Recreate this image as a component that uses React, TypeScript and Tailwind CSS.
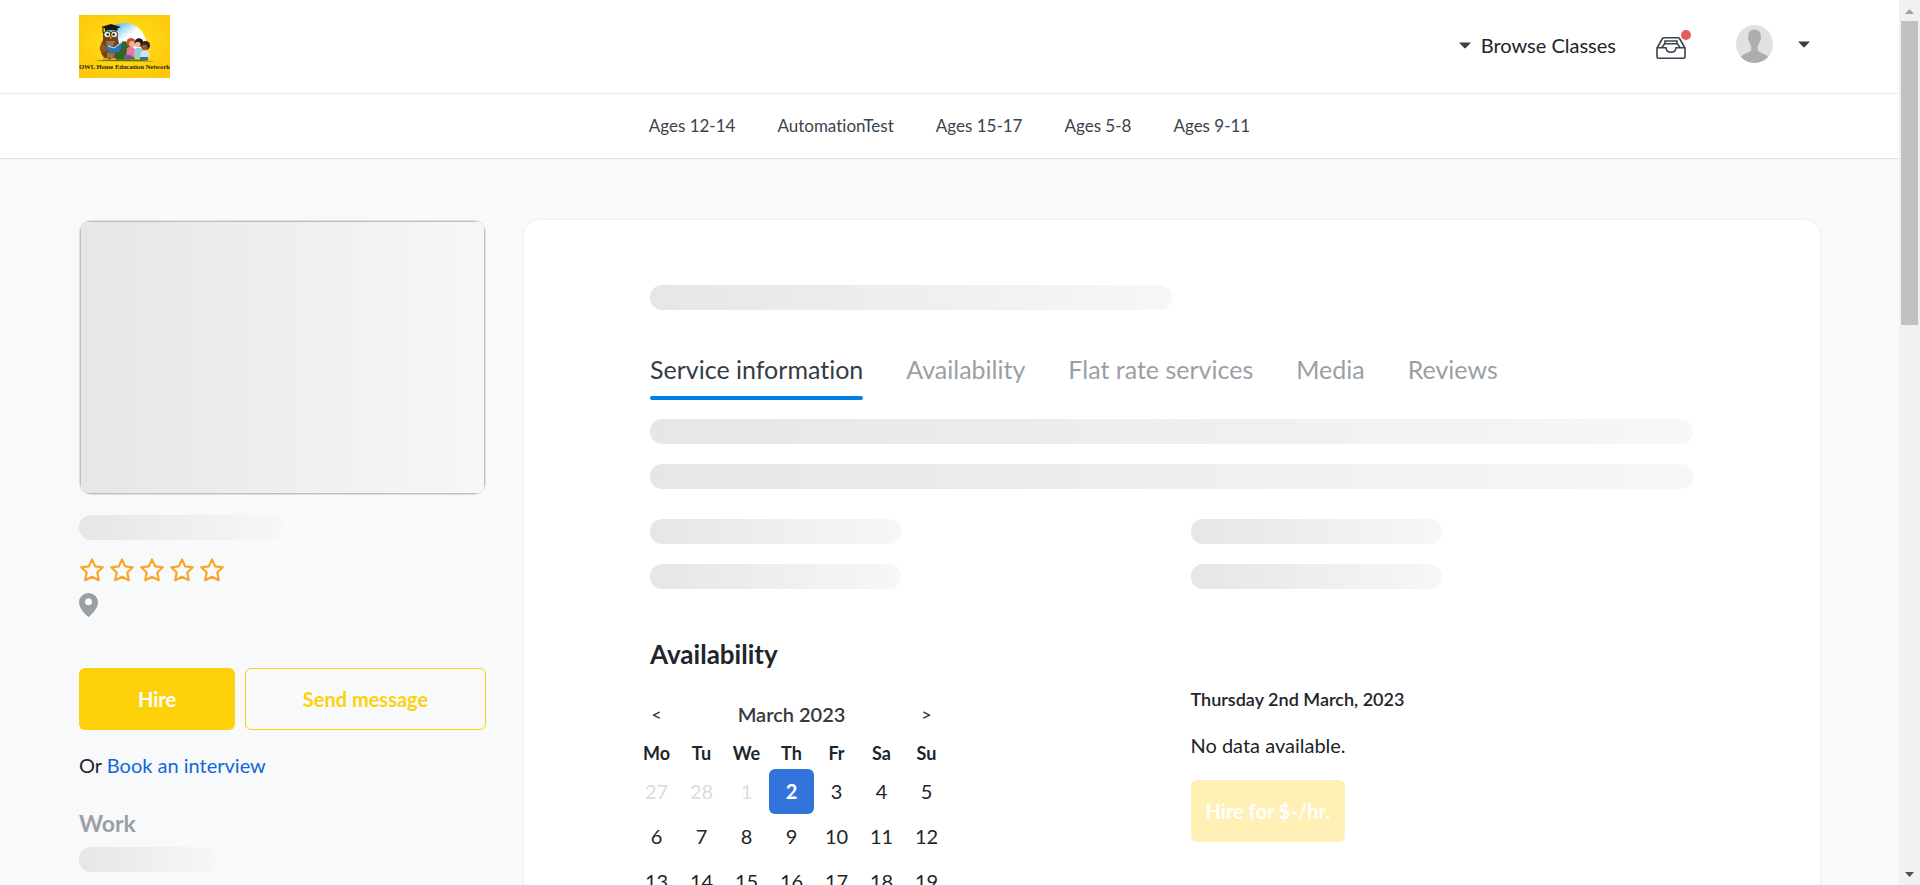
import React from "react";

const categories = ["Ages 12-14", "AutomationTest", "Ages 15-17", "Ages 5-8", "Ages 9-11"];
const tabs = ["Service information", "Availability", "Flat rate services", "Media", "Reviews"];
const weekdays = ["Mo", "Tu", "We", "Th", "Fr", "Sa", "Su"];
const weeks = [
  [27, 28, 1, 2, 3, 4, 5],
  [6, 7, 8, 9, 10, 11, 12],
  [13, 14, 15, 16, 17, 18, 19],
];

function Skeleton({ className }: { className: string }) {
  return <div className={`h-[25px] rounded-xl bg-linear-to-r from-[#e6e6e6] to-[#f7f7f7] ${className}`} />;
}

function Caret() {
  return (
    <svg width="12" height="7" viewBox="0 0 12 7" aria-hidden="true">
      <path d="M0 0.5h12L7 5.8q-1 1-2 0z" fill="#373f49" />
    </svg>
  );
}

function Logo() {
  return (
    <svg className="h-[63px] w-[91px]" viewBox="0 0 91 63" role="img" aria-label="OWL Home Education Network">
      <defs>
        <radialGradient id="logo-bg" cx="50%" cy="45%" r="65%">
          <stop offset="0" stopColor="#ffe318" />
          <stop offset="1" stopColor="#fdc60a" />
        </radialGradient>
        <linearGradient id="logo-sky" x1="0" y1="0" x2="1" y2="1">
          <stop offset="0.1" stopColor="#45b4ea" />
          <stop offset="0.5" stopColor="#ffffff" />
        </linearGradient>
      </defs>
      <rect width="91" height="63" fill="url(#logo-bg)" />
      <path d="M29 15Q36 7 47 8Q62 9 67 25V36H38z" fill="url(#logo-sky)" />
      <path d="M33 45Q36 28 46 26Q53 30 56 44z" fill="#2d6a1d" />
      <path d="M15 46Q45 42 76 46.500Q45 46 15 46z" fill="#5b7a12" />
      <path d="M24 17H38L39 24Q41 30 39 36Q37 43 33 44H27Q21 40 21.500 32Q22 28 24 25z" fill="#70411f" />
      <path d="M27 26H36L34 31H28z" fill="#a8713c" />
      <path d="M23 28Q18 34 24 38L31 34z" fill="#8b5529" />
      <path d="M28 37L36 39L34 43H28z" fill="#a8713c" />
      <ellipse cx="28.300" cy="19.500" rx="3.600" ry="3.400" fill="#f5efc4" stroke="#2a2118" strokeWidth="0.900" />
      <ellipse cx="35.200" cy="19.500" rx="3.400" ry="3.400" fill="#f5efc4" stroke="#2a2118" strokeWidth="0.900" />
      <circle cx="28.800" cy="19.500" r="1.200" fill="#222" />
      <circle cx="34.600" cy="19.500" r="1.200" fill="#222" />
      <path d="M30.500 21.500h2.500l-1.200 3z" fill="#f5a300" />
      <path d="M22 12L32 9L42 12L38.500 13.500V16Q32 14 26 16V13.500z" fill="#171717" />
      <path d="M24 13v5" stroke="#171717" strokeWidth="1" />
      <path d="M27 30L35 32L44 26L41 36L35 39L29 36z" fill="#2876b5" />
      <path d="M29 31L35 33L43 27" fill="none" stroke="#d9e8ee" strokeWidth="1" />
      <path d="M24 43h5v2h-5zM32 43h5v2h-5z" fill="#e4a02b" />
      <circle cx="52" cy="27.500" r="4.500" fill="#c75131" />
      <circle cx="53" cy="29" r="3" fill="#f0b18c" />
      <path d="M48 33Q52 30 56 34L55 42H47z" fill="#e8789a" />
      <path d="M45 41Q53 38 55 44H45z" fill="#7854a6" />
      <circle cx="60" cy="27.500" r="4.200" fill="#20191a" />
      <circle cx="58.800" cy="29.500" r="2.700" fill="#efb894" />
      <path d="M56 34Q60 31 64 35L63 43H55z" fill="#8fd0d6" />
      <circle cx="66.500" cy="30.500" r="4.500" fill="#3b201a" />
      <circle cx="65.500" cy="32.500" r="3" fill="#9a5a38" />
      <path d="M62 37Q67 34 71 38L69 44H61z" fill="#cfe3ee" />
      <path d="M61 42h8v3h-8z" fill="#4168a5" />
      <text
        x="45.500"
        y="54"
        textAnchor="middle"
        fontFamily="Liberation Serif, serif"
        fontWeight="700"
        fontSize="6.600"
        fill="#1f2a12"
      >
        OWL Home Education Network
      </text>
    </svg>
  );
}

function InboxIcon() {
  return (
    <svg width="30" height="22" viewBox="0 0 30 22" fill="none" stroke="#3a424c" strokeWidth="1.600" aria-hidden="true">
      <path d="M1 11L6.500 1.500Q7 0.800 8 0.800H22Q23 0.800 23.500 1.500L29 11V19.500Q29 21.200 27.300 21.200H2.700Q1 21.200 1 19.500z" />
      <path d="M1 10.800H10Q10.300 15.300 15 15.300T20 10.800H29" />
      <path d="M6 10.500L8.500 6.800H21.500L24 10.500M9 6.800V4H21V6.800" />
    </svg>
  );
}

function Avatar() {
  return (
    <svg width="37" height="38" viewBox="0 0 37 38" aria-hidden="true">
      <clipPath id="avatar-clip">
        <ellipse cx="18.500" cy="19" rx="18.500" ry="19" />
      </clipPath>
      <g clipPath="url(#avatar-clip)">
        <rect width="37" height="38" fill="#e1e1e1" />
        <path
          d="M18.500 4.500C14 4.500 12 7.500 12.400 11.500C11.500 12 12 15 13 15.800C13.400 18.500 15 20 15.300 21.500V25C14.500 28 7 28.500 5 32L3 38H34L32 32C30 28.500 22.500 28 21.700 25V21.500C22 20 23.600 18.500 24 15.800C25 15 25.500 12 24.600 11.500C25 7.500 23 4.500 18.500 4.500z"
          fill="#adadad"
        />
      </g>
    </svg>
  );
}

function Star() {
  return (
    <svg width="26" height="26" viewBox="0 0 26 26" fill="none" stroke="#f9a62b" strokeWidth="2.200" strokeLinejoin="round" aria-hidden="true">
      <path d="M13 2.500L16.200 9.400L23.800 10.300L18.300 15.500L19.800 23.200L13 19.700L6.200 23.200L7.700 15.500L2.200 10.300L9.800 9.400z" />
    </svg>
  );
}

function Header() {
  return (
    <header className="shrink-0 bg-white">
      <div className="flex h-[94px] items-start justify-between border-b border-[#ebebeb] pr-[89px] pl-[79px]">
        <a href="#home" className="mt-[15px]">
          <Logo />
        </a>
        <div className="flex items-center pt-[25px]">
          <button type="button" className="mr-10 flex items-center gap-2.5 pt-0.5 text-xl leading-9 text-[#212529]">
            <Caret />
            Browse Classes
          </button>
          <button type="button" aria-label="Inbox" className="relative mt-2 mr-[50px]">
            <InboxIcon />
            <span className="absolute -top-[7px] -right-[5px] size-2.5 rounded-full bg-[#e45c5c]" />
          </button>
          <button type="button" aria-label="Account" className="flex items-center gap-[25px]">
            <Avatar />
            <Caret />
          </button>
        </div>
      </div>
      <nav className="flex h-[65px] items-center justify-center gap-[42px] border-b border-[#dde1e6] text-[17px] text-[#3a424c]">
        {categories.map((c) => (
          <a key={c} href="#category">
            {c}
          </a>
        ))}
      </nav>
    </header>
  );
}

function Profile() {
  return (
    <aside className="w-[407px] shrink-0 pt-px">
      <div className="h-[275px] overflow-hidden rounded-xl border border-[#dcdfe3]">
        <div className="h-full border border-[#bfc0c1] bg-linear-to-r from-[#e6e6e6] to-[#f7f7f7]" />
      </div>
      <Skeleton className="mt-5 w-1/2" />
      <div className="mt-[17px] flex gap-1" role="img" aria-label="No rating">
        {[1, 2, 3, 4, 5].map((n) => (
          <Star key={n} />
        ))}
      </div>
      <svg className="mt-2.5" width="19" height="24" viewBox="0 0 19 24" aria-hidden="true">
        <path
          fillRule="evenodd"
          d="M9.500 0A9.500 9.200 0 0 0 0 9.200C0 15 5.500 20.500 9.500 24.200C13.500 20.500 19 15 19 9.200A9.500 9.200 0 0 0 9.500 0zM9.500 5.200a3.500 3.500 0 1 1 0 7a3.500 3.500 0 0 1 0-7z"
          fill="#9b9fa5"
        />
      </svg>
      <div className="mt-[51px] flex gap-2.5 text-xl font-bold">
        <button type="button" className="h-[62px] w-[156px] rounded-md bg-[#fdd20b] text-white">
          Hire
        </button>
        <button type="button" className="h-[62px] flex-1 rounded-md border border-[#fdd20b] text-[#fdd20b]">
          Send message
        </button>
      </div>
      <p className="mt-5 text-xl leading-[30px] text-[#212529]">
        Or{" "}
        <a href="#interview" className="text-[#1267d8]">
          Book an interview
        </a>
      </p>
      <h2 className="mt-[29px] text-[23px] leading-7 font-bold text-[#9b9fa5]">Work</h2>
      <Skeleton className="mt-2.5 w-1/3" />
    </aside>
  );
}

function Calendar() {
  return (
    <div className="-ml-4 w-[315px]">
      <div className="flex h-10 items-center text-xl font-semibold text-[#373a3c]">
        <button type="button" aria-label="Previous month" className="w-[45px] text-lg">
          &lt;
        </button>
        <span className="flex-1 text-center">March 2023</span>
        <button type="button" aria-label="Next month" className="w-[45px] text-lg">
          &gt;
        </button>
      </div>
      <table className="w-full table-fixed border-collapse text-center text-xl text-[#212529]">
        <thead>
          <tr className="h-[35px]">
            {weekdays.map((d) => (
              <th key={d} className="p-0 pt-0.5 text-lg font-bold">
                {d}
              </th>
            ))}
          </tr>
        </thead>
        <tbody>
          {weeks.map((week, row) => (
            <tr key={row}>
              {week.map((day, col) => {
                const previous = row === 0 && col < 3;
                const selected = row === 0 && col === 3;
                const tone = selected
                  ? "rounded-md bg-[#3273dc] font-bold text-white"
                  : previous
                    ? "text-[#dbdbdb]"
                    : "";
                return (
                  <td key={day} className="p-0">
                    <button type="button" className={`block h-[45px] w-full pb-0.5 ${tone}`}>
                      {day}
                    </button>
                  </td>
                );
              })}
            </tr>
          ))}
        </tbody>
      </table>
    </div>
  );
}

function Details() {
  return (
    <main className="min-w-0 flex-1 rounded-2xl border border-[#eff0f2] bg-white pt-[65px] pr-[127px] pb-16 pl-[126px]">
      <Skeleton className="w-1/2" />
      <div className="mt-[42px] flex gap-[43px] text-[25px] leading-[34px]" role="tablist">
        {tabs.map((t, i) => (
          <button
            key={t}
            type="button"
            role="tab"
            aria-selected={i === 0}
            className={i === 0 ? "text-[#343d47]" : "text-[#9b9fa5]"}
          >
            {t}
            <span className={i === 0 ? "mt-2.5 block h-1 rounded-sm bg-[#0080e5]" : "mt-2.5 block h-1"} />
          </button>
        ))}
      </div>
      <Skeleton className="mt-[19px] w-full" />
      <Skeleton className="mt-5 w-full" />
      <div className="mt-[30px] grid grid-cols-2 gap-x-[38px] gap-y-5">
        <Skeleton className="w-1/2" />
        <Skeleton className="w-1/2" />
        <Skeleton className="w-1/2" />
        <Skeleton className="w-1/2" />
      </div>
      <div className="mt-12 grid grid-cols-2 gap-x-[38px]">
        <section>
          <h2 className="mb-[22px] text-[26px] leading-[35px] font-bold text-[#212529]">Availability</h2>
          <Calendar />
        </section>
        <section className="pt-[47px] text-[#212529]">
          <h3 className="text-lg leading-[30px] font-semibold">Thursday 2nd March, 2023</h3>
          <p className="mt-4 text-xl leading-[30px]">No data available.</p>
          <button type="button" disabled className="mt-5 h-[62px] rounded-md bg-[#fff0b5] px-[15px] text-xl font-bold text-white">
            Hire for $-/hr.
          </button>
        </section>
      </div>
    </main>
  );
}

function ScrollRail() {
  return (
    <div className="flex w-[21px] shrink-0 flex-col items-center bg-[#f1f1f1]" aria-hidden="true">
      <svg className="mt-[9px] mb-[7px] shrink-0" width="9" height="5" viewBox="0 0 9 5">
        <path d="M0 5L4.500 0L9 5z" fill="#a3a3a3" />
      </svg>
      <div className="h-[304px] w-[17px] shrink bg-[#c1c1c1]" />
      <svg className="mt-auto mb-2 shrink-0" width="9" height="5" viewBox="0 0 9 5">
        <path d="M0 0L4.500 5L9 0z" fill="#505050" />
      </svg>
    </div>
  );
}

export default function App() {
  return (
    <div className="flex h-screen overflow-hidden font-['Lato',sans-serif] [font-variant-ligatures:none]">
      <div className="flex min-w-0 flex-1 flex-col overflow-hidden bg-[#f8f9fb]">
        <Header />
        <div className="flex shrink-0 items-start gap-[37px] pt-[60px] pr-[78px] pl-[79px]">
          <Profile />
          <Details />
        </div>
      </div>
      <ScrollRail />
    </div>
  );
}
